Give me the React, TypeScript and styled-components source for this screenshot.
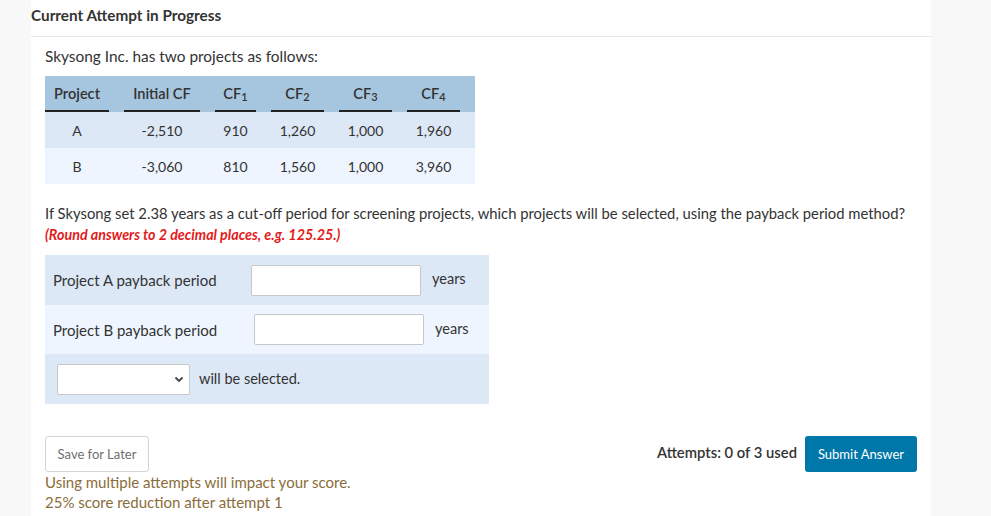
import React from "react";
import styled, { createGlobalStyle } from "styled-components";

const GlobalStyle = createGlobalStyle`
  html, body {
    margin: 0;
    padding: 0;
    background: #f8f8f8;
    font-family: Lato, "Open Sans", "Liberation Sans", sans-serif;
    color: #333;
  }
`;

const Page = styled.div`
  display: flex;
  padding-left: 31px;
  min-height: 516px;
`;

const Panel = styled.div`
  width: 900px;
  background: #fff;
`;

const Header = styled.div`
  box-sizing: border-box;
  height: 37px;
  padding-top: 5px;
  line-height: 20px;
  font-size: 15.3px;
  font-weight: 700;
  color: #333;
  border-bottom: 1px solid #e8e8e8;
`;

const Content = styled.div`
  padding: 9px 14px 0;
`;

const Intro = styled.p`
  margin: 0 0 10px;
  font-size: 15.4px;
  line-height: 20px;
`;

const Band = styled.div<{ $bg: string }>`
  display: grid;
  grid-template-columns: 64px 76px 41px 53px 53px 53px;
  column-gap: 15px;
  width: 430px;
  box-sizing: border-box;
  padding-right: 15px;
  height: 36px;
  background: ${(p) => p.$bg};
`;

const BandCell = styled.div<{ $head?: boolean }>`
  display: flex;
  align-items: center;
  justify-content: center;
  font-size: ${(p) => (p.$head ? "14.6px" : "14px")};
  font-weight: ${(p) => (p.$head ? 600 : 400)};
  color: #333;
  box-sizing: border-box;
  border-bottom: ${(p) => (p.$head ? "2px solid #222" : "none")};
  padding-top: ${(p) => (p.$head ? "1px" : "0")};
`;

const Sub = styled.span`
  font-size: 11px;
  position: relative;
  top: 3px;
`;

const Question = styled.p`
  margin: 19px 0 0;
  font-size: 14.8px;
  line-height: 21px;
`;

const Hint = styled.p`
  margin: 0 0 10px;
  font-size: 14.3px;
  line-height: 21px;
  font-weight: 700;
  font-style: italic;
  color: #e31b1b;
`;

const AnswerBox = styled.div`
  width: 444px;
`;

const AnswerRow = styled.div<{ $bg: string; $h: number; $pl: number }>`
  display: flex;
  align-items: center;
  height: ${(p) => p.$h}px;
  padding-left: ${(p) => p.$pl}px;
  background: ${(p) => p.$bg};
`;

const Label = styled.span<{ $w: number }>`
  width: ${(p) => p.$w}px;
  font-size: 15px;
  color: #333;
`;

const TextInput = styled.input`
  box-sizing: border-box;
  width: 170px;
  height: 31px;
  border: 1px solid #c8c8c8;
  border-radius: 2px;
  background: #fff;
  margin: 0;
`;

const Unit = styled.span`
  margin-left: 11px;
  margin-top: -3px;
  font-size: 14.5px;
  color: #333;
`;

const Select = styled.div`
  box-sizing: border-box;
  width: 133px;
  height: 31px;
  border: 1px solid #c8c8c8;
  border-radius: 2px;
  background: #fff;
  display: flex;
  align-items: center;
  justify-content: flex-end;
  padding-right: 5px;
`;

const Selected = styled.span`
  margin-left: 9px;
  margin-top: -2px;
  font-size: 14.5px;
  color: #333;
`;

const Footer = styled.div`
  display: flex;
  justify-content: space-between;
  align-items: flex-start;
  margin-top: 32px;
`;

const LeftCol = styled.div`
  display: flex;
  flex-direction: column;
  align-items: flex-start;
`;

const SaveButton = styled.button`
  box-sizing: border-box;
  width: 104px;
  height: 36px;
  border: 1px solid #d4d4d4;
  border-radius: 3px;
  background: #fff;
  color: #6f6f6f;
  font-family: inherit;
  font-size: 13px;
  padding: 0;
`;

const Note = styled.div`
  font-size: 15px;
  line-height: 20px;
  color: #8a6d3b;
`;

const RightCol = styled.div`
  display: flex;
  align-items: center;
  gap: 8px;
`;

const Attempts = styled.span`
  font-size: 14.8px;
  font-weight: 600;
  color: #333;
  margin-top: -4px;
`;

const SubmitButton = styled.button`
  box-sizing: border-box;
  width: 112px;
  height: 36px;
  border: none;
  border-radius: 3px;
  background: #0077a9;
  color: #fff;
  font-family: inherit;
  font-size: 13px;
  padding: 0;
`;

const CF = ({ n }: { n: number }) => (
  <>
    CF<Sub>{n}</Sub>
  </>
);

const rows = [
  ["A", "-2,510", "910", "1,260", "1,000", "1,960"],
  ["B", "-3,060", "810", "1,560", "1,000", "3,960"],
];

export default function App() {
  return (
    <>
      <GlobalStyle />
      <Page>
        <Panel>
          <Header>Current Attempt in Progress</Header>
          <Content>
            <Intro>Skysong Inc. has two projects as follows:</Intro>
            <div>
              <Band $bg="#a6c6df">
                <BandCell $head>Project</BandCell>
                <BandCell $head>Initial CF</BandCell>
                <BandCell $head>
                  <CF n={1} />
                </BandCell>
                <BandCell $head>
                  <CF n={2} />
                </BandCell>
                <BandCell $head>
                  <CF n={3} />
                </BandCell>
                <BandCell $head>
                  <CF n={4} />
                </BandCell>
              </Band>
              {rows.map((r, i) => (
                <Band key={r[0]} $bg={i === 0 ? "#dde8f7" : "#eef5fe"}>
                  {r.map((v, j) => (
                    <BandCell key={j}>{v}</BandCell>
                  ))}
                </Band>
              ))}
            </div>
            <Question>
              If Skysong set 2.38 years as a cut-off period for screening projects, which projects will be
              selected, using the payback period method?
            </Question>
            <Hint>(Round answers to 2 decimal places, e.g. 125.25.)</Hint>
            <AnswerBox>
              <AnswerRow $bg="#dde8f7" $h={50} $pl={8}>
                <Label $w={198}>Project A payback period</Label>
                <TextInput />
                <Unit>years</Unit>
              </AnswerRow>
              <AnswerRow $bg="#eef5fe" $h={49} $pl={8}>
                <Label $w={201}>Project B payback period</Label>
                <TextInput />
                <Unit>years</Unit>
              </AnswerRow>
              <AnswerRow $bg="#dde8f7" $h={50} $pl={12}>
                <Select>
                  <svg width="10" height="7" viewBox="0 0 10 7">
                    <path d="M1.5 1.5 L5 5 L8.5 1.5" fill="none" stroke="#444" strokeWidth="1.8" />
                  </svg>
                </Select>
                <Selected>will be selected.</Selected>
              </AnswerRow>
            </AnswerBox>
            <Footer>
              <LeftCol>
                <SaveButton>Save for Later</SaveButton>
                <Note>Using multiple attempts will impact your score.</Note>
                <Note>25% score reduction after attempt 1</Note>
              </LeftCol>
              <RightCol>
                <Attempts>Attempts: 0 of 3 used</Attempts>
                <SubmitButton>Submit Answer</SubmitButton>
              </RightCol>
            </Footer>
          </Content>
        </Panel>
      </Page>
    </>
  );
}
